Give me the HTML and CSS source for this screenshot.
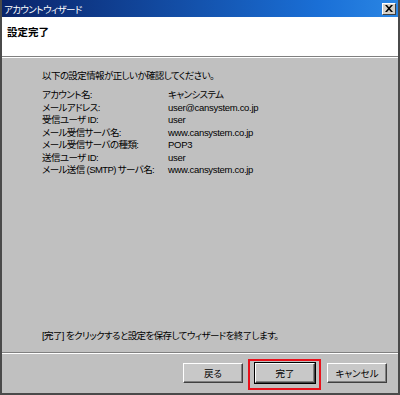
FILE: index.html
```html
<!DOCTYPE html>
<html>

<head>
    <meta charset="utf-8" />
    <title>アカウントウィザード</title>
    <link rel="stylesheet" href="styles.css">
</head>

<body>

    <div class="window">
        <div class="titlebar">
            <span class="title">アカウントウィザード</span>
            <button class="close" aria-label="閉じる">
                <svg width="8" height="7" viewBox="0 0 8 7">
                    <path d="M0 0h2l2 2.2L6 0h2L5 3.5 8 7H6L4 4.8 2 7H0l3-3.5z" fill="#000" />
                </svg>
            </button>
        </div>
        <div class="header">
            <h1>設定完了</h1>
        </div>
        <div class="content">
            <p class="intro">以下の設定情報が正しいか確認してください。</p>
            <div class="summary">
                <div>アカウント名:</div>
                <div>キャンシステム</div>
                <div>メールアドレス:</div>
                <div class="en">user@cansystem.co.jp</div>
                <div>受信ユーザ ID:</div>
                <div class="en">user</div>
                <div>メール受信サーバ名:</div>
                <div class="en">www.cansystem.co.jp</div>
                <div>メール受信サーバの種類:</div>
                <div class="en">POP3</div>
                <div>送信ユーザ ID:</div>
                <div class="en">user</div>
                <div>メール送信 (SMTP) サーバ名:</div>
                <div class="en">www.cansystem.co.jp</div>
            </div>
            <p class="note">[完了] をクリックすると設定を保存してウィザードを終了します。</p>
        </div>
        <div class="footer">
            <button class="btn">戻る</button>
            <span class="marked"><button class="btn default">完了</button></span>
            <button class="btn">キャンセル</button>
        </div>
    </div>

</body>

</html>
```

FILE: styles.css
```css
* {
    box-sizing: border-box;
}

body {
    margin: 0;
    font-family: "Liberation Sans", "Noto Sans CJK JP", sans-serif;
    font-size: 9.5px;
    letter-spacing: -0.6px;
    font-feature-settings: "palt";
    color: #000;
}

.window {
    width: 400px;
    height: 395px;
    border: 2px solid #4a4a4a;
    border-top: 0;
    background: #c0c0c0;
    display: flex;
    flex-direction: column;
}

.titlebar {
    height: 17px;
    padding: 0 2px 0 2px;
    background: linear-gradient(to right, #0a246a, #1a6fd6 80%, #2a86e4);
    color: #fff;
    display: flex;
    align-items: center;
    justify-content: space-between;
}

.title {
    font-size: 9.5px;
}

.close {
    width: 14px;
    height: 12px;
    padding: 0;
    background: #d4d0c8;
    border: 1px solid;
    border-color: #fff #404040 #404040 #fff;
    display: flex;
    align-items: center;
    justify-content: center;
}

.header {
    height: 40px;
    background: #fff;
    padding: 7px 5px 0;
    border-bottom: 1px solid #808080;
    box-shadow: 0 1px 0 #fff;
}

.header h1 {
    margin: 0;
    font-size: 10.5px;
    font-weight: bold;
    letter-spacing: 0;
}

.content {
    flex: 1;
    display: flex;
    flex-direction: column;
    padding: 11px 0 10px 40px;
    margin-top: 1px;
}

.intro {
    margin: 0 0 7px;
    line-height: 13px;
}

.summary {
    display: grid;
    grid-template-columns: 126px auto;
    line-height: 12.5px;
    white-space: nowrap;
}

.en {
    letter-spacing: -0.3px;
}

.note {
    margin: auto 0 0;
    line-height: 13px;
}

.footer {
    height: 41px;
    border-top: 1px solid #808080;
    box-shadow: inset 0 1px 0 #fff;
    padding: 10px 11px 0 0;
    display: flex;
    justify-content: flex-end;
    align-items: flex-start;
    gap: 12px;
}

.btn {
    width: 60px;
    height: 20px;
    padding: 0;
    font: inherit;
    background: #c8c8c8;
    border: 1px solid;
    border-color: #fff #404040 #404040 #fff;
    box-shadow: inset -1px -1px 0 #808080;
}

.btn.default {
    outline: 1px solid #000;
}

.marked {
    position: relative;
    display: flex;
}

.marked::after {
    content: "";
    position: absolute;
    top: -4px;
    left: -7px;
    right: -6px;
    bottom: -7px;
    border: 2px solid #e8101a;
}
```
